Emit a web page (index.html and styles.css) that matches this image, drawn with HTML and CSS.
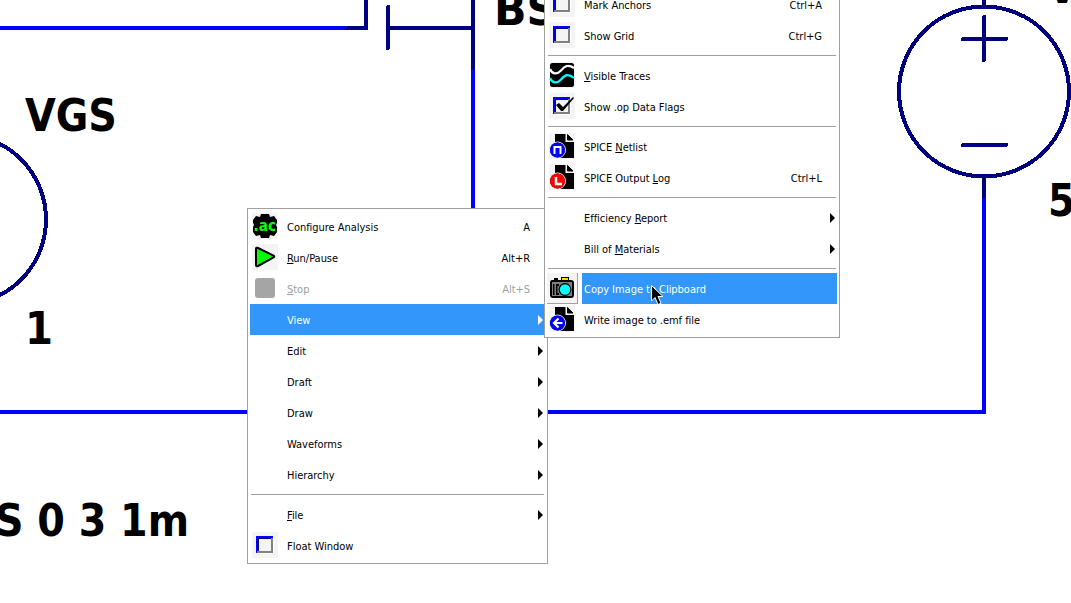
FILE: index.html
```html
<!DOCTYPE html>
<html lang="en">
<head>
<meta charset="utf-8">
<title>Schematic editor</title>
<link rel="stylesheet" href="styles.css">
</head>
<body>
<svg class="defs" width="0" height="0" aria-hidden="true">
  <symbol id="box" viewBox="0 0 26 26"><path d="M4 4h18v18H4z" fill="#fff"/><path d="M4 21V4h17v3H7v14z" fill="#000080"/><path d="M4 21V4h17v2H6v15z" fill="#00f"/><path d="M7 7h12v12H7z" fill="#f4f4f4"/><path d="M19 6h2v15H5v-2h14z" fill="#808080"/></symbol>
  <symbol id="doc" viewBox="0 0 26 26"><path d="M6 1h10.500v8h8.500v16H6z"/><path d="M18.500 1.500v5.500h5.500z" stroke="#000"/><circle cx="8.500" cy="17" r="8" stroke="#fff"/></symbol>
</svg>
<main class="canvas">
  <svg class="schematic" width="1071" height="603" viewBox="0 0 1071 603">
    <g class="wire">
      <path d="M-4 28H346M473 68V220M-4 412H984V196"/>
    </g>
    <g class="part" shape-rendering="crispEdges">
      <path d="M348 28H366V-4M388 7V48M388 28H473M473 -4V68"/>
      <path d="M984 -4V7M984 177V196M963 39H1006M984 17V60M963 145H1006"/>
      <circle cx="984" cy="91.500" r="85"/>
      <circle cx="-39" cy="219.500" r="85"/>
    </g>
    <g class="value">
      <text x="25" y="131" textLength="92" lengthAdjust="spacingAndGlyphs">VGS</text>
      <text x="25" y="344" textLength="28" lengthAdjust="spacingAndGlyphs">1</text>
      <text x="494" y="25" textLength="92" lengthAdjust="spacingAndGlyphs">BSS</text>
      <text x="1047" y="3">V</text>
      <text x="1048" y="216" textLength="27" lengthAdjust="spacingAndGlyphs">5</text>
      <text x="-5" y="536" textLength="194" lengthAdjust="spacingAndGlyphs">S 0 3 1m</text>
    </g>
  </svg>

  <nav class="menu menu-main">
    <div class="item"><span class="icon"><svg viewBox="0 0 26 26"><path d="M9 1h8l1 3 4-1 3 4v3l-1 2 1 2v5l-3 4-4-1-1 3H9l-1-3-4 1-3-4v-5l1-2-1-2V7l3-4 4 1z"/><text class="ac" x="1.500" y="17.500" textLength="22.500" lengthAdjust="spacingAndGlyphs">.ac</text></svg></span><span class="label">Configure Analysis</span><span class="key">A</span></div>
    <div class="item"><span class="icon"><svg viewBox="0 0 26 26"><path d="M4 5Q4 3 6 4l15.500 7.500q1.500 1 0 2L6 22q-2 1-2-1z" fill="#0f0" stroke="#000" stroke-width="2"/></svg></span><span class="label"><u>R</u>un/Pause</span><span class="key">Alt+R</span></div>
    <div class="item disabled"><span class="icon plain"><svg viewBox="0 0 26 26"><rect x="3" y="3" width="20" height="20" rx="3" fill="#a5a5a5"/></svg></span><span class="label"><u>S</u>top</span><span class="key">Alt+S</span></div>
    <div class="item open"><span class="label">View</span><i class="arrow"></i></div>
    <div class="item"><span class="label">Edit</span><i class="arrow"></i></div>
    <div class="item"><span class="label">Draft</span><i class="arrow"></i></div>
    <div class="item"><span class="label">Draw</span><i class="arrow"></i></div>
    <div class="item"><span class="label">Waveforms</span><i class="arrow"></i></div>
    <div class="item"><span class="label">Hierarchy</span><i class="arrow"></i></div>
    <hr>
    <div class="item"><span class="label"><u>F</u>ile</span><i class="arrow"></i></div>
    <div class="item"><span class="icon"><svg><use href="#box"/></svg></span><span class="label">Float Window</span></div>
  </nav>

  <nav class="menu menu-view">
    <div class="item"><span class="icon"><svg><use href="#box"/></svg></span><span class="label">Mark Anchors</span><span class="key">Ctrl+A</span></div>
    <div class="item"><span class="icon"><svg><use href="#box"/></svg></span><span class="label">Show Grid</span><span class="key">Ctrl+G</span></div>
    <hr>
    <div class="item"><span class="icon"><svg viewBox="0 0 26 26"><rect x="1" y="1" width="24" height="24" rx="2.500"/><g fill="none" stroke-width="2.200"><path d="M1 7C3 12 8 13 12 8.500S19 2 25 6" stroke="#fff"/><path d="M1 16C3 21 8 22 12 17.500S19 11 25 16" stroke="#0ff"/></g></svg></span><span class="label"><u>V</u>isible Traces</span></div>
    <div class="item"><span class="icon"><svg viewBox="0 0 26 26"><use href="#box"/><path d="M7 12l3-2 4 4L24 4l1 1-11 13h-2z"/></svg></span><span class="label">Show .op Data Flags</span></div>
    <hr>
    <div class="item"><span class="icon"><svg viewBox="0 0 26 26"><g class="blue"><use href="#doc"/><circle cx="8.500" cy="17" r="7.500"/></g><path d="M5.500 21v-7h6v7" fill="none" stroke="#fff" stroke-width="2"/></svg></span><span class="label">SPICE <u>N</u>etlist</span></div>
    <div class="item"><span class="icon"><svg viewBox="0 0 26 26"><g class="red"><use href="#doc"/><circle cx="8.500" cy="17" r="7.500"/></g><path d="M7 13v7h6" fill="none" stroke="#fff" stroke-width="2.500"/></svg></span><span class="label">SPICE Output <u>L</u>og</span><span class="key">Ctrl+L</span></div>
    <hr>
    <div class="item"><span class="label">Efficiency <u>R</u>eport</span><i class="arrow"></i></div>
    <div class="item"><span class="label">Bill of <u>M</u>aterials</span><i class="arrow"></i></div>
    <hr>
    <div class="item current"><span class="icon"><svg viewBox="0 0 26 26"><path d="M3 5h2V3h4v2h3V2h8v3h2q3 0 3 3v12q0 3-3 3H4q-3 0-3-3V8q0-3 2-3z"/><path d="M3 7h20v14H3z" fill="#808080"/><path d="M4 9h1.500v11H4zM7 9h3v2H8.500v7H10v2H7z"/><circle cx="16" cy="14.500" r="6.500"/><circle cx="16" cy="14.500" r="5.200" fill="#0ff"/><path d="M13 3h6v2h-6z" fill="#ffe000"/></svg></span><span class="label">Copy Image to Clipboard</span></div>
    <div class="item"><span class="icon"><svg viewBox="0 0 26 26"><g class="blue"><use href="#doc"/><circle cx="8.500" cy="17" r="7.500"/></g><path d="M13.500 17H5M9.500 12.500L5 17l4.500 4.500" fill="none" stroke="#fff" stroke-width="2.200"/></svg></span><span class="label">Write image to .emf file</span></div>
  </nav>

  <svg class="pointer" width="14" height="21" viewBox="0 0 14 21"><path d="M.500.500V16l3.500-3.500L7 19.500l3-1.300-3-6.700h5z" stroke="#fff"/></svg>
</main>
</body>
</html>
```
FILE: styles.css
```css
body { margin: 0; overflow: hidden; background: #fff; }
.defs { position: absolute; }
.canvas { position: relative; width: 1071px; height: 603px; overflow: hidden; }
.schematic { display: block; }
.wire, .part { fill: none; stroke-width: 4; stroke-linecap: round; }
.wire { stroke: #00f; }
.part { stroke: #000080; }
.value { font: bold 44px "DejaVu Sans Condensed", "DejaVu Sans", sans-serif; }

.menu {
  position: absolute;
  box-sizing: border-box;
  padding: 2px;
  border: 1px solid #a0a0a0;
  background: #fff;
  color: #000;
  font: 11px "DejaVu Sans Condensed", "DejaVu Sans", sans-serif;
  letter-spacing: -0.03px;
}
.menu-main { left: 247px; top: 208px; width: 301px; }
.menu-view { left: 544px; top: -14px; width: 296px; }
.menu hr { height: 1px; margin: 4px 1px; border: 0; background: #a0a0a0; }
.item {
  display: grid;
  grid-template-columns: 26px 1fr auto;
  align-items: center;
  box-sizing: border-box;
  height: 31px;
  padding-left: 2px;
  white-space: pre;
}
.icon { grid-column: 1; grid-row: 1; width: 26px; height: 26px; margin-bottom: 1px; background: #f4f4f4; }
.icon.plain { background: none; }
.icon svg { display: block; width: 26px; height: 26px; }
.label, .key { box-sizing: border-box; height: 31px; padding-top: 2px; line-height: 30px; }
.label { grid-column: 2; grid-row: 1; padding-left: 9px; }
.label u { text-underline-offset: 1px; text-decoration-thickness: 1px; text-decoration-skip-ink: none; }
.key { grid-column: 3; grid-row: 1; margin-right: 15px; }
.arrow {
  grid-column: 3;
  grid-row: 1;
  margin-right: 2px;
  border: 5px solid transparent;
  border-left-color: currentColor;
  border-right: 0;
}
.disabled { color: #a0a0a0; }
.open { background: #3296fa; color: #fff; }
.current { grid-template-columns: 31px 1fr; padding-left: 0; color: #fff; }
.current .icon { margin: 0; padding: 2px; border: solid #a0a0a0; border-width: 0 1px 1px 0; }
.current .label { margin-left: 4px; padding-left: 2px; background: #3296fa; }
.blue, .red { fill: #000; }
.blue circle { fill: #00f; }
.red circle { fill: #f00; }
.ac { font: bold 15px "DejaVu Sans", sans-serif; fill: #0f0; }
.pointer { position: absolute; left: 651px; top: 285px; }
```
